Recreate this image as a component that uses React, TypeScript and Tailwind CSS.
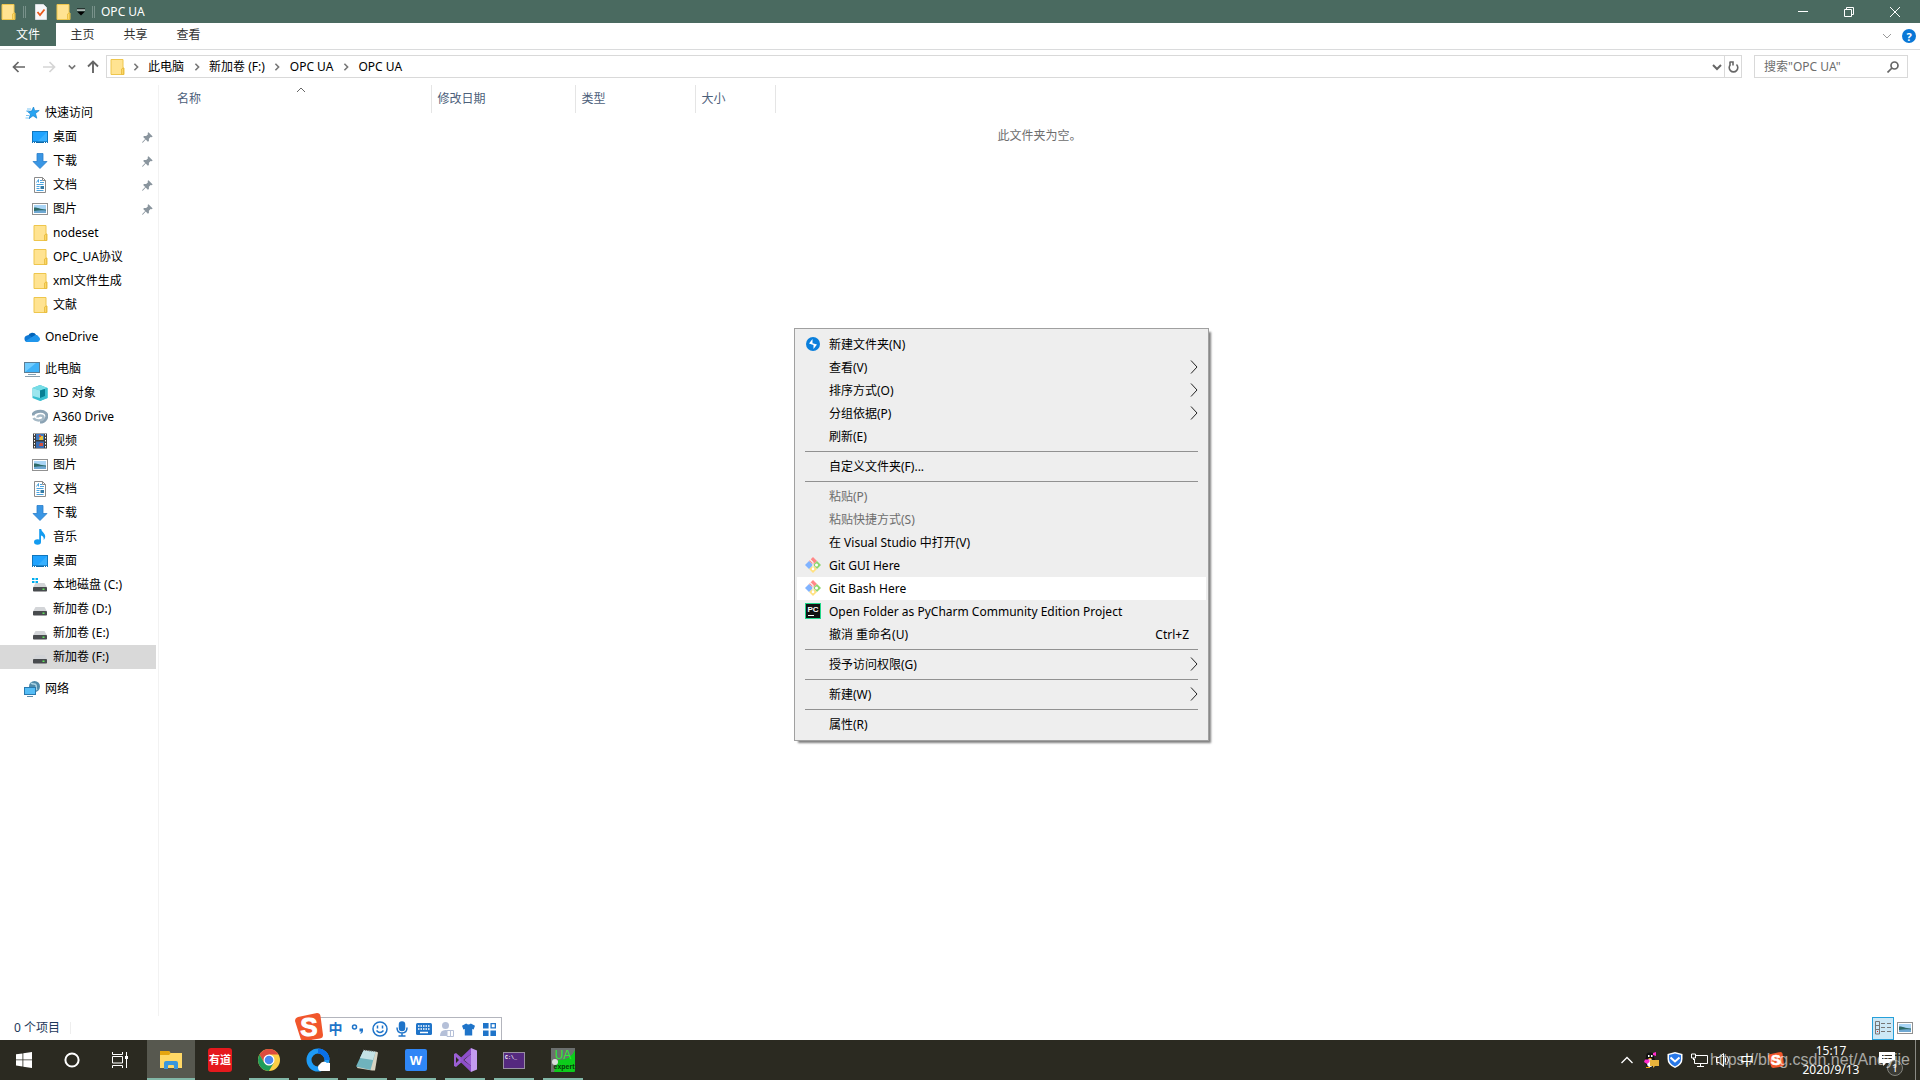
import React, { useState } from "react";

type IconProps = { className?: string };

const Folder = ({ className = "" }: IconProps) => (
  <svg width="16" height="16" viewBox="0 0 16 16" className={className}>
    <path d="M2 0.5h12v8.5h1v6.5H2z" fill="#ffe391" stroke="#eec64d" />
    <path d="M12.5 15.5v-5.5l2-1v6.5z" fill="#fbd866" stroke="#e6b93c" strokeWidth="0.8" />
  </svg>
);

const StarIcon = () => (
  <svg width="16" height="16" viewBox="0 0 16 16">
    <path d="M9.5 2l1.200 3.700 4.500-.2-3.700 3 1.300 4.700-3.800-2.500-4 3 1.500-4.700-3.300-2.700 4.400-.2z" fill="#27a4f2" stroke="#1683cf" strokeWidth="0.7" />
    <path d="M3 4h4M2 6h3M2 10.500h3M1.500 13h3" stroke="#7cc5f3" />
  </svg>
);

const DesktopIcon = () => (
  <svg width="16" height="16" viewBox="0 0 16 16">
    <rect x="0.5" y="2.500" width="15" height="11" fill="#1fa3ff" stroke="#0f76bd" />
    <path d="M5 13L15 3v10z" fill="#37b0ff" />
    <path d="M1 13h14" stroke="#0b5c97" />
    <path d="M1 13.500h1M3 13.500h1M12 13.500h1M14 13.500h1" stroke="#fff" />
  </svg>
);

const DownloadIcon = () => (
  <svg width="16" height="16" viewBox="0 0 16 16">
    <path d="M5 0.500h6v8h4L8 15.500 1 8.500h4z" fill="#3996e4" stroke="#2a7fca" strokeWidth="0.8" />
  </svg>
);

const DocumentIcon = () => (
  <svg width="16" height="16" viewBox="0 0 16 16">
    <path d="M2.500 0.500h8l3 3v12h-11z" fill="#fff" stroke="#8b8b8b" />
    <path d="M10.500 0.500v3h3" fill="none" stroke="#8b8b8b" />
    <path d="M4.500 5.500l2-3v3M8 3.500h2M8 5.500h4M4.500 7.500h7M4.500 9.500h3M4.500 11.500h3M4.500 13.500h7" fill="none" stroke="#4aa3df" />
    <rect x="8.500" y="9" width="3.500" height="3" fill="#347ba6" />
  </svg>
);

const PictureIcon = () => (
  <svg width="16" height="16" viewBox="0 0 16 16">
    <rect x="0.5" y="2.500" width="15" height="11" fill="#fff" stroke="#919191" />
    <path d="M2 4h12v8H2z" fill="#a9d5f6" />
    <path d="M2 6.500c3-.5 5 1.500 12 2V11H2z" fill="#2d6a67" />
    <path d="M2 10c4-.8 8-.8 12-.5V12H2z" fill="#6fa8d2" />
  </svg>
);

const CloudIcon = () => (
  <svg width="16" height="16" viewBox="0 0 16 16">
    <path d="M4 7a4.500 4.500 0 0 1 8.300-.8L7 10z" fill="#0364b8" />
    <path d="M3.500 13A3.300 3.300 0 0 1 3 6.500c1.500-.4 3 .2 4 1L12 13z" fill="#0f78d4" />
    <path d="M10 6.800c1.500-1.200 4-.8 4.600 1A2.800 2.800 0 0 1 13.500 13H4c-1 0-2-.4-2.500-1z" fill="#2096ec" />
  </svg>
);

const ComputerIcon = () => (
  <svg width="16" height="16" viewBox="0 0 16 16">
    <rect x="0.500" y="1.500" width="15" height="10" fill="#3fb2f8" stroke="#5c7e95" />
    <path d="M1 11L12 2H1z" fill="#70ccff" />
    <path d="M4 13.500h8" stroke="#86a3b6" />
    <path d="M1 15.500h15" stroke="#8ba0ae" />
  </svg>
);

const CubeIcon = () => (
  <svg width="16" height="16" viewBox="0 0 16 16">
    <path d="M8 0l7.500 3v10L8 16 .5 13V3z" fill="#37bfd0" />
    <path d="M8 0l7.500 3L8 5.500.5 3z" fill="#77dde6" />
    <path d="M8 5.500L15.500 3v10L8 16z" fill="#37bfd0" />
    <path d="M8 5.500l5-1.500v7L8 13z" fill="#067f94" />
    <path d="M.5 3L8 5.500V13L.5 11z" fill="#9be6ee" />
  </svg>
);

const A360Icon = () => (
  <svg width="16" height="16" viewBox="0 0 16 16" fill="none">
    <path d="M1 6.500c0-4 9-6 12.500-2.500S13 13 8 13" stroke="#8ba3b4" strokeWidth="3" />
    <path d="M1.500 9c2 3.500 10 3 10-.5 0-3-6-2.500-6 0" stroke="#a7bac7" strokeWidth="2.500" />
  </svg>
);

const VideoIcon = () => (
  <svg width="16" height="16" viewBox="0 0 16 16">
    <path d="M1 0.500h14v15H1z" fill="#3c3c3c" />
    <path d="M4 1h8v6H4z" fill="#3e78c0" />
    <path d="M4 8.500h8V15H4z" fill="#386db5" />
    <path d="M8 3h3v4H7z" fill="#e6c336" />
    <path d="M7 2h2v2H7zM8 10h3v3H7z" fill="#d5513b" />
    <path d="M2.500 1v14M13.500 1v14" stroke="#fff" strokeDasharray="1.500 1.500" />
  </svg>
);

const MusicIcon = () => (
  <svg width="16" height="16" viewBox="0 0 16 16">
    <ellipse cx="5.500" cy="13" rx="3.500" ry="2.700" fill="#139bf0" />
    <path d="M7.200 0h2c.3 3 4 4 4 7.500 0 1.500-.7 2.500-1.500 3.500.4-2.500-.7-4-2.700-4.500V13H7.200z" fill="#139bf0" />
  </svg>
);

const DriveIcon = ({ system = false }: { system?: boolean }) => (
  <svg width="16" height="16" viewBox="0 0 16 16">
    <path d="M3.500 6h9L15 10.500H1z" fill="#d3d5d8" />
    <rect x="1" y="10" width="14" height="4.500" rx="0.800" fill="#484b4e" />
    <rect x="10.500" y="11.500" width="2" height="1.500" fill="#5fe35b" />
    {system && <path d="M0 1h2.500v2H0zM3.500 1H6v2H3.500zM0 4h2.500v2H0zM3.500 4H6v2H3.500z" fill="#00adef" />}
  </svg>
);

const NetworkIcon = () => (
  <svg width="16" height="16" viewBox="0 0 16 16">
    <circle cx="10.500" cy="5.500" r="5.500" fill="#4f8aa9" />
    <path d="M7 2c2 2 4 0 5 2s-1 3 1 5" stroke="#abd4e5" strokeWidth="1.500" fill="none" />
    <rect x="0.500" y="6.500" width="11" height="7" fill="#55bdf6" stroke="#2979ae" />
    <path d="M3 15.500h6" stroke="#5c8aa8" />
  </svg>
);

const PinIcon = () => (
  <svg width="11" height="11" viewBox="0 0 11 11" fill="#8a959e">
    <path d="M6.500 .3L10.700 4.500 9.600 5.300 8.600 5 6.900 6.800 6.900 8.900 5.900 9.700 3.700 7.400 1 10.500 0 11l.5-1.200L3.200 7 1.200 5l.8-1 2.200 0 1.800-1.700-.4-1.200z" />
  </svg>
);

type Dir = "up" | "down" | "right";
const chevrons: Record<Dir, string> = { up: "M1 6l4-4 4 4", down: "M1 2l4 4 4-4", right: "M3 0l4 4-4 4" };
const Chevron = ({ dir, color = "#666", bold = false, size = 10 }: { dir: Dir; color?: string; bold?: boolean; size?: number }) => (
  <svg width={size} height={size} viewBox="0 0 10 8" fill="none" className="shrink-0">
    <path d={chevrons[dir]} stroke={color} strokeWidth={bold ? 2 : 1} />
  </svg>
);

const SogouIcon = ({ size }: { size: number }) => (
  <svg width={size} height={size} viewBox="0 0 28 28" className="shrink-0">
    <path d="M3 4L22 0q3 0 3.500 3L28 22q0 3-3 3.500L9 28q-3 0-3.600-3L0 8q0-3 3-4z" fill="#f1562b" />
    <text x="14" y="23" textAnchor="middle" fontSize="26" fontWeight="bold" fill="#fff" stroke="#fff" fontFamily="Liberation Sans, sans-serif">S</text>
  </svg>
);

const GitIcon = () => (
  <svg width="16" height="16" viewBox="0 0 16 16">
    <path d="M8 0l4 4-4 4-4-4z" fill="#f88" />
    <path d="M12 4l4 4-4 4-4-4z" fill="#8cd66d" />
    <path d="M8 8l4 4-4 4-4-4z" fill="#ffe180" />
    <path d="M4 4l4 4-4 4-4-4z" fill="#80b3ff" />
    <path d="M5 2.500l3 3v6" stroke="#f4f4f4" strokeWidth="1.200" fill="none" />
    <circle cx="11.500" cy="8" r="1.500" fill="#fff" />
    <circle cx="8" cy="12" r="1.300" fill="#fff" />
  </svg>
);

const PyCharmIcon = () => (
  <svg width="16" height="16" viewBox="0 0 16 16">
    <rect x="0.500" y="0.500" width="15" height="15" fill="#111" stroke="#21d789" />
    <text x="8" y="8.500" textAnchor="middle" fontSize="8" fontWeight="bold" fill="#fff" fontFamily="Liberation Sans, sans-serif">PC</text>
    <path d="M3 12.500h6" stroke="#fff" />
  </svg>
);

const NewFolderIcon = () => (
  <svg width="14" height="14" viewBox="0 0 14 14">
    <circle cx="7" cy="7" r="7" fill="#0a7fdc" />
    <path d="M6.500 2v4.200L11 7.500 7.500 12V8L3 6.500z" fill="#fff" />
  </svg>
);

const quickAccess = [
  { name: "桌面", icon: <DesktopIcon />, pinned: true },
  { name: "下载", icon: <DownloadIcon />, pinned: true },
  { name: "文档", icon: <DocumentIcon />, pinned: true },
  { name: "图片", icon: <PictureIcon />, pinned: true },
  { name: "nodeset", icon: <Folder /> },
  { name: "OPC_UA协议", icon: <Folder /> },
  { name: "xml文件生成", icon: <Folder /> },
  { name: "文献", icon: <Folder /> },
];

const computer = [
  { name: "3D 对象", icon: <CubeIcon /> },
  { name: "A360 Drive", icon: <A360Icon /> },
  { name: "视频", icon: <VideoIcon /> },
  { name: "图片", icon: <PictureIcon /> },
  { name: "文档", icon: <DocumentIcon /> },
  { name: "下载", icon: <DownloadIcon /> },
  { name: "音乐", icon: <MusicIcon /> },
  { name: "桌面", icon: <DesktopIcon /> },
  { name: "本地磁盘 (C:)", icon: <DriveIcon system /> },
  { name: "新加卷 (D:)", icon: <DriveIcon /> },
  { name: "新加卷 (E:)", icon: <DriveIcon /> },
  { name: "新加卷 (F:)", icon: <DriveIcon /> },
];

type TreeItem = { name: string; icon: React.ReactNode; pinned?: boolean };

function TreeGroup({ root, items = [], selected, onSelect }: { root: TreeItem; items?: TreeItem[]; selected: string; onSelect: (name: string) => void }) {
  return (
    <div>
      <a href="#" className="flex h-6 items-center gap-[5px] pl-6 hover:bg-[#e5f3ff]">
        {root.icon}
        {root.name}
      </a>
      {items.map((item) => (
        <a
          key={item.name}
          href="#"
          onClick={() => onSelect(item.name)}
          className={`${selected === item.name ? "bg-[#d9d9d9]" : ""} mr-0.5 flex h-6 items-center gap-[5px] pl-8 pr-[3px]`}
        >
          {item.icon}
          <span className="flex-1">{item.name}</span>
          {item.pinned && <PinIcon />}
        </a>
      ))}
    </div>
  );
}

type MenuEntry = { label: string; icon?: React.ReactNode; sub?: boolean; disabled?: boolean; active?: boolean; shortcut?: string };

// each inner list is one block between separators
const menuGroups: MenuEntry[][] = [
  [
    { label: "新建文件夹(N)", icon: <NewFolderIcon /> },
    { label: "查看(V)", sub: true },
    { label: "排序方式(O)", sub: true },
    { label: "分组依据(P)", sub: true },
    { label: "刷新(E)" },
  ],
  [{ label: "自定义文件夹(F)..." }],
  [
    { label: "粘贴(P)", disabled: true },
    { label: "粘贴快捷方式(S)", disabled: true },
    { label: "在 Visual Studio 中打开(V)" },
    { label: "Git GUI Here", icon: <GitIcon /> },
    { label: "Git Bash Here", icon: <GitIcon />, active: true },
    { label: "Open Folder as PyCharm Community Edition Project", icon: <PyCharmIcon /> },
    { label: "撤消 重命名(U)", shortcut: "Ctrl+Z" },
  ],
  [{ label: "授予访问权限(G)", sub: true }],
  [{ label: "新建(W)", sub: true }],
  [{ label: "属性(R)" }],
];

function ContextMenu() {
  return (
    <div className="absolute left-[794px] top-[328px] w-[415px] border border-[#a0a0a0] bg-[#eeeeee] px-0.5 py-1 shadow-[3px_3px_2px_-1px_rgba(0,0,0,0.5)]">
      {menuGroups.map((group, i) => (
        <React.Fragment key={i}>
          {i > 0 && <hr className="mx-2 my-[3px] border-[#919191]" />}
          {group.map((entry) => (
            <button
              key={entry.label}
              disabled={entry.disabled}
              className={`${entry.active ? "bg-white" : ""} flex h-[23px] w-full items-center pl-2 pr-[7px] text-left hover:bg-white disabled:text-[#6d6d6d]`}
            >
              <span className="mr-2 flex w-4 justify-center pb-px">{entry.icon}</span>
              <span className="flex-1">{entry.label}</span>
              {entry.shortcut && <span className="pr-2.5">{entry.shortcut}</span>}
              {entry.sub && (
                <span className="pb-0.5">
                  <svg width="10" height="14" viewBox="0 0 10 14" fill="none">
                    <path d="M2 0.500L8 7l-6 6.500" stroke="#222" />
                  </svg>
                </span>
              )}
            </button>
          ))}
        </React.Fragment>
      ))}
    </div>
  );
}

const taskbarApps = [
  {
    name: "有道",
    running: false,
    icon: (
      <svg width="24" height="24" viewBox="0 0 24 24">
        <rect width="24" height="24" rx="3" fill="#e5191d" />
        <text x="12" y="16" textAnchor="middle" fontSize="11" fontWeight="bold" fill="#fff">有道</text>
      </svg>
    ),
  },
  {
    name: "Chrome",
    running: true,
    icon: (
      <svg width="22" height="22" viewBox="0 0 22 22">
        <circle cx="11" cy="11" r="11" fill="#fbcf45" />
        <path d="M1.500 5.500A11 11 0 0 1 20.500 5.500H11L6.200 13.800z" fill="#dd4b3e" />
        <path d="M1.500 5.500A11 11 0 0 0 11 22l4.800-8.200L11 16.500 6.200 13.800z" fill="#1e9d5a" />
        <circle cx="11" cy="11" r="5.500" fill="#fff" />
        <circle cx="11" cy="11" r="4.300" fill="#4a87ee" />
      </svg>
    ),
  },
  {
    name: "QQ浏览器",
    running: true,
    icon: (
      <svg width="24" height="24" viewBox="0 0 24 24">
        <circle cx="12" cy="12" r="9" fill="none" stroke="#1e9bf5" strokeWidth="5" />
        <path d="M12 3a9 9 0 0 1 9 9" fill="none" stroke="#0a6fe8" strokeWidth="5" />
        <path d="M14 23a4 4 0 0 1 0-7 4.500 4.500 0 0 1 7-1 4 4 0 0 1 2 8z" fill="#fff" />
      </svg>
    ),
  },
  {
    name: "记事本",
    running: true,
    icon: (
      <svg width="24" height="24" viewBox="0 0 24 24">
        <path d="M9 2l12 1.500 2 1-3 18-3 0L2 20z" fill="#d7d3c2" />
        <path d="M8.500 2.500l12 1.500L15.500 22 1 18.500z" fill="#6fb3bd" />
        <path d="M8.500 2.500l12 1.500-2.500 8-13-2z" fill="#c4e2e5" />
        <path d="M8 2l13 1.500" stroke="#666" strokeDasharray="1 1" />
      </svg>
    ),
  },
  {
    name: "WPS",
    running: true,
    icon: (
      <svg width="22" height="22" viewBox="0 0 22 22">
        <rect width="22" height="22" rx="2" fill="#2f86f6" />
        <text x="11" y="15.500" textAnchor="middle" fontSize="13" fontWeight="bold" fill="#fff" fontFamily="Liberation Sans, sans-serif">W</text>
      </svg>
    ),
  },
  {
    name: "Visual Studio",
    running: true,
    icon: (
      <svg width="24" height="24" viewBox="0 0 24 24">
        <path d="M1 6l2-1 15 13V6L3 19l-2-1V6zm2 3v6l3-3z" fill="#9b5fd4" fillRule="evenodd" />
        <path d="M18 6L9.500 12.500l-2.500-2L18 0v6zM18 18L9.500 11.500l-2.500 2L18 24z" fill="#8e4fca" />
        <path d="M18 0l6 2.500v19L18 24z" fill="#c49bf0" />
      </svg>
    ),
  },
  {
    name: "命令提示符",
    running: true,
    icon: (
      <svg width="22" height="17" viewBox="0 0 22 17">
        <rect x="0.500" y="0.500" width="21" height="16" fill="#55297f" stroke="#998fa2" />
        <text x="2" y="7" fontSize="5" fontWeight="bold" fill="#fff" fontFamily="Liberation Mono, monospace">C:\_</text>
      </svg>
    ),
  },
  {
    name: "UaExpert",
    running: true,
    icon: (
      <svg width="24" height="24" viewBox="0 0 24 24">
        <rect width="24" height="24" rx="1" fill="#0ccc1b" />
        <path d="M0 0h24v2q-4 10-17 10L3 24H0z" fill="#6c706f" />
        <circle cx="4" cy="14" r="3" fill="#d9dedb" />
        <text x="12" y="11" textAnchor="middle" fontSize="12" fill="#2af036" fontFamily="Liberation Sans, sans-serif">UA</text>
        <text x="13" y="21" textAnchor="middle" fontSize="7" fontWeight="bold" fill="#063a08" fontFamily="Liberation Sans, sans-serif">expert</text>
      </svg>
    ),
  },
];

function Taskbar() {
  return (
    <footer className="relative flex h-10 items-stretch bg-[#2b2a21] text-white">
      <button aria-label="开始" className="flex w-12 items-center justify-center">
        <svg width="16" height="16" viewBox="0 0 16 16" fill="#fff">
          <path d="M0 2.300L6.500 1.400v6.100H0zM7.300 1.300L16 0v7.500H7.300zM0 8.300h6.500v6.200L0 13.600zM7.300 8.300H16V16l-8.700-1.300z" />
        </svg>
      </button>
      <button aria-label="搜索" className="flex w-12 items-center justify-center">
        <svg width="16" height="16" viewBox="0 0 16 16">
          <circle cx="8" cy="8" r="6.600" fill="none" stroke="#fff" strokeWidth="2" />
        </svg>
      </button>
      <button aria-label="任务视图" className="mr-[3px] flex w-12 items-center justify-center">
        <svg width="16" height="16" viewBox="0 0 16 16" fill="none" stroke="#fff">
          <path d="M0.500 0v2.500h10V0M0.500 16v-2.500h10V16M0.500 4.500h10v6.500h-10zM14.500 0v16" />
          <path d="M13 4h3v3h-3z" fill="#fff" stroke="none" />
        </svg>
      </button>
      <button aria-label="文件资源管理器" className="mr-px flex w-12 items-center justify-center border-b-2 border-[#82b7a7] bg-[#57584f] pt-0.5">
        <svg width="22" height="18" viewBox="0 0 22 18">
          <path d="M0 0h9l1.500 2H22v15H0z" fill="#ffd866" />
          <path d="M0 0h9l1.500 2.500L9 4H0z" fill="#e5a50f" />
          <path d="M4 18v-6q0-2 2-2h10q2 0 2 2v6h-4v-3q0-1-1-1H9q-1 0-1 1v3z" fill="#3a97dd" />
        </svg>
      </button>
      {taskbarApps.map((app) => (
        <button key={app.name} aria-label={app.name} className="mr-px flex w-12 flex-col items-center">
          <span className="flex flex-1 items-center pt-0.5">{app.icon}</span>
          <span className={`${app.running ? "bg-[#82b7a7]" : ""} h-0.5 w-10`} />
        </button>
      ))}
      <div className="ml-auto flex items-center">
        <button aria-label="显示隐藏的图标" className="mr-2.5">
          <svg width="12" height="8" viewBox="0 0 12 8" fill="none">
            <path d="M0.500 7L6 1.500 11.500 7" stroke="#fff" strokeWidth="1.300" />
          </svg>
        </button>
        <svg width="16" height="16" viewBox="0 0 16 16" className="mr-2">
          <ellipse cx="7" cy="9" rx="5" ry="6.500" fill="#111" />
          <circle cx="7" cy="4.500" r="4" fill="#111" />
          <ellipse cx="7" cy="11" rx="3" ry="4" fill="#fff" />
          <path d="M5 3h1.500v2H5zM8 3h1.500v2H8z" fill="#fff" />
          <path d="M5 6h4l-2 1.500z" fill="#f5a400" />
          <path d="M2 7.500h4.500V10L4 12 1 10zM10 1l3-1v4l-3-1z" fill="#ff2ccc" />
          <path d="M7 8h9v6h-4l-2 2v-2H7z" fill="#e8b33c" />
          <path d="M3 15.500h4" stroke="#f5a400" />
        </svg>
        <svg width="16" height="16" viewBox="0 0 16 16" className="mr-2">
          <path d="M8 0l7.500 2v5q0 6-7.500 9Q.5 13 .5 7V2z" fill="#fff" />
          <path d="M8 1.500l6 1.600V7q0 5-6 7.500Q2 12 2 7V3.100z" fill="#2878e8" />
          <path d="M3.500 5.500L8 9.500l4.500-4" stroke="#fff" strokeWidth="2" fill="none" />
        </svg>
        <svg width="17" height="15" viewBox="0 0 17 15" fill="none" stroke="#fff" className="mr-2">
          <path d="M5 2.500h11.500v8H3.500V6M6 13.500h7M9.500 10.500v3M0.500 1h4v4h-4zM2.500 5v2" />
        </svg>
        <svg width="16" height="16" viewBox="0 0 16 16" fill="none" stroke="#fff" className="mr-2">
          <path d="M0.500 5.500h2.500L7.500 1.500v13L3 10.500H0.500zM9.500 6v4M11.500 4.500q2 3.500 0 7" />
        </svg>
        <span className="w-3.5 text-sm">中</span>
        <span className="ml-3.5 mr-[17px]"><SogouIcon size={16} /></span>
        <time className="w-[60px] text-center leading-[19px]">
          15:17
          <br />
          2020/9/13
        </time>
        <button aria-label="通知" className="relative ml-[18px] h-10 w-9">
          <svg width="28" height="30" viewBox="0 0 28 30" className="absolute left-0 top-2">
            <path d="M0 4h16v11H7l-3 3v-3H0z" fill="#fff" />
            <path d="M3 7.500h10M3 10.500h10" stroke="#2b2a21" />
            <circle cx="16" cy="20" r="7.500" fill="#3a3a34" stroke="#85857e" />
            <text x="16" y="24" textAnchor="middle" fontSize="11" fill="#fff">1</text>
          </svg>
        </button>
        <span className="mr-1 h-10 w-px bg-[#8a8a84]" />
      </div>
      <span className="pointer-events-none absolute right-[10px] top-2 whitespace-nowrap font-['Liberation_Sans',sans-serif] text-base leading-6 text-white/60">
        https://blog.csdn.net/Andyjie
      </span>
    </footer>
  );
}

function ImeBar() {
  return (
    <div className="absolute bottom-0 left-[295px] flex h-[27px] w-[207px] items-end">
      <div className="ml-4 flex h-[23px] flex-1 items-center gap-2 border border-b-0 border-[#b3b5bd] bg-white pl-4 text-[#1f74c9]">
        <span className="w-[15px] text-center text-sm font-bold leading-none">中</span>
        <svg width="13" height="14" viewBox="0 0 13 14">
          <circle cx="3.500" cy="5" r="2" fill="none" stroke="#1f74c9" strokeWidth="1.500" />
          <path d="M8.500 6.500H12v2.500q0 2-2.500 3v-1.300q1-.5 1-1.200h-2z" fill="#1f74c9" />
        </svg>
        <svg width="16" height="16" viewBox="0 0 16 16" fill="none" stroke="#1f74c9" strokeWidth="1.500">
          <circle cx="8" cy="8" r="7" />
          <path d="M5.500 4.500v3M10.500 4.500v3M4.500 9.500q3.500 4 7 0" />
        </svg>
        <svg width="12" height="16" viewBox="0 0 12 16" fill="none" stroke="#1f74c9" strokeWidth="1.500">
          <rect x="3.500" y="1" width="5" height="8.500" rx="2.500" fill="#1f74c9" />
          <path d="M1 6.500q0 5.500 5 5.500t5-5.500M6 12v3M2.500 15h7" />
        </svg>
        <svg width="16" height="12" viewBox="0 0 16 12">
          <rect width="16" height="12" rx="1.500" fill="#1f74c9" />
          <path d="M2 3h12M2 6h12" stroke="#fff" strokeWidth="1.500" strokeDasharray="1.500 1" />
          <path d="M4 9.500h8" stroke="#fff" strokeWidth="1.500" />
        </svg>
        <svg width="14" height="15" viewBox="0 0 14 15">
          <circle cx="5.500" cy="3.500" r="3.500" fill="#b5c0d8" />
          <path d="M0 14q0-6 5.500-6 2 0 3 1v5z" fill="#b5c0d8" />
          <path d="M7 8.500h6.500v6H7zM10.500 8.500v6" fill="#fff" stroke="#b5c0d8" />
        </svg>
        <svg width="13" height="13" viewBox="0 0 14 13" fill="#1f74c9">
          <path d="M4.500 0q2.500 2 5 0L14 2.500l-1.500 4L11 6v7H3V6l-1.500.5L0 2.500z" />
        </svg>
        <svg width="13" height="13" viewBox="0 0 14 14" fill="#1f74c9">
          <path d="M0 0h6v6H0zM0 8h6v6H0zM8 8h6v6H8z" />
          <path d="M8.700 .7h4.600v4.600H8.700z" fill="none" stroke="#1f74c9" strokeWidth="1.400" />
        </svg>
      </div>
      <span className="absolute left-0 top-0"><SogouIcon size={28} /></span>
    </div>
  );
}

const path = ["此电脑", "新加卷 (F:)", "OPC UA", "OPC UA"];

export default function App() {
  const [selected, setSelected] = useState("新加卷 (F:)");
  const [search, setSearch] = useState("");

  return (
    <div className="relative flex min-h-screen flex-col bg-white font-['Noto_Sans','Noto_Sans_CJK_SC',sans-serif] text-xs text-black">
      <header className="flex h-[23px] items-center bg-[#4a6a60] text-white">
        <Folder />
        <span className="ml-[7px] h-3 w-[3px] border-x border-[#78918a]" />
        <svg width="12" height="16" viewBox="0 0 12 16" className="ml-[9px]">
          <path d="M0.500 0.500h8l3 3v12H.5z" fill="#f7f8fa" stroke="#d7dce0" />
          <path d="M2.500 8L5 11l4.500-5.500" stroke="#ea5a1c" strokeWidth="1.800" fill="none" />
        </svg>
        <Folder className="ml-2" />
        <svg width="8" height="8" viewBox="0 0 8 8" className="ml-1.5">
          <path d="M0 1h8" stroke="#000" />
          <path d="M0 3.500h8L4 7.500z" fill="#000" />
          <path d="M0 2h8" stroke="#fff" />
        </svg>
        <span className="ml-[7px] h-3 w-[3px] border-x border-[#78918a]" />
        <h1 className="ml-1.5">OPC UA</h1>
        <div className="ml-auto flex h-full pr-0.5">
          <button aria-label="最小化" className="flex w-[46px] items-center justify-center">
            <span className="h-px w-2.5 bg-white" />
          </button>
          <button aria-label="还原" className="flex w-[46px] items-center justify-center">
            <svg width="10" height="10" viewBox="0 0 10 10" fill="none" stroke="#fff">
              <path d="M0.500 2.500h7v7h-7zM2.500 2.500v-2h7v7h-2" />
            </svg>
          </button>
          <button aria-label="关闭" className="flex w-[46px] items-center justify-center">
            <svg width="10" height="10" viewBox="0 0 10 10" fill="none" stroke="#fff">
              <path d="M0 0l10 10M10 0L0 10" />
            </svg>
          </button>
        </div>
      </header>

      <nav className="flex h-[27px] items-start border-b border-[#dadbdc] text-[#333]">
        <button className="h-[23px] w-14 bg-[#4a6a60] text-white">文件</button>
        <button className="h-6 w-[53px]">主页</button>
        <button className="h-6 w-[53px]">共享</button>
        <button className="h-6 w-[53px]">查看</button>
        <div className="ml-auto flex h-[26px] items-center gap-2.5 pr-1">
          <Chevron dir="down" color="#999" />
          <button aria-label="帮助" className="flex size-3.5 items-center justify-center rounded-full bg-[#0a78d7] text-[11px] font-bold leading-none text-white">?</button>
        </div>
      </nav>

      <div className="flex h-[33px] items-center pl-3 pr-3">
        <button aria-label="后退">
          <svg width="13" height="12" viewBox="0 0 13 12" fill="none" stroke="#666" strokeWidth="1.700">
            <path d="M13 6H1.500M6.500 1l-5 5 5 5" />
          </svg>
        </button>
        <button aria-label="前进" className="ml-[18px]">
          <svg width="13" height="12" viewBox="0 0 13 12" fill="none" stroke="#d5d5d5" strokeWidth="1.700">
            <path d="M0 6h11.500M6.500 1l5 5-5 5" />
          </svg>
        </button>
        <button aria-label="最近浏览的位置" className="ml-3">
          <Chevron dir="down" color="#777" bold size={8} />
        </button>
        <button aria-label="上移" className="ml-[11px]">
          <svg width="12" height="13" viewBox="0 0 12 13" fill="none" stroke="#666" strokeWidth="1.900">
            <path d="M6 13V1.500M1 6.500l5-5 5 5" />
          </svg>
        </button>
        <div className="ml-[7px] flex h-[23px] flex-1 items-center border border-[#d9d9d9] pl-0.5">
          <Folder />
          {path.map((part, i) => (
            <React.Fragment key={i}>
              <span className="flex w-[21px] justify-center">
                <Chevron dir="right" color="#777" bold size={8} />
              </span>
              <a href="#" className="px-0.5">{part}</a>
            </React.Fragment>
          ))}
          <button aria-label="以前的位置" className="ml-auto mr-0.5">
            <Chevron dir="down" color="#666" bold />
          </button>
          <button aria-label="刷新" className="flex h-full w-[17px] items-center justify-center border-l border-[#d9d9d9]">
            <svg width="11" height="12" viewBox="0 0 11 12" fill="none" stroke="#666" strokeWidth="1.600">
              <path d="M8.500 3.500A4.300 4.300 0 1 1 2.500 3.500M2 1v3.500M1.500 1H5v3.500" />
            </svg>
          </button>
        </div>
        <label className="ml-3 flex h-[23px] w-[154px] items-center border border-[#d9d9d9] pl-[9px] pr-2">
          <input
            aria-label="搜索"
            value={search}
            onChange={(e) => setSearch(e.target.value)}
            placeholder={'搜索"OPC UA"'}
            className="w-0 flex-1 outline-none placeholder:text-[#6d6d6d]"
          />
          <svg width="12" height="12" viewBox="0 0 12 12" fill="none" stroke="#666" strokeWidth="1.700">
            <circle cx="7.500" cy="4.500" r="3.500" />
            <path d="M5 7L.5 11.500" />
          </svg>
        </label>
      </div>

      <main className="flex flex-1 pt-0.5">
        <aside className="flex w-[159px] flex-col gap-2 border-r border-[#f2f2f2] pt-4">
          <TreeGroup root={{ name: "快速访问", icon: <StarIcon /> }} items={quickAccess} selected={selected} onSelect={setSelected} />
          <TreeGroup root={{ name: "OneDrive", icon: <CloudIcon /> }} selected={selected} onSelect={setSelected} />
          <TreeGroup root={{ name: "此电脑", icon: <ComputerIcon /> }} items={computer} selected={selected} onSelect={setSelected} />
          <TreeGroup root={{ name: "网络", icon: <NetworkIcon /> }} selected={selected} onSelect={setSelected} />
        </aside>
        <section className="flex-1">
          <table className="w-full table-fixed">
            <thead>
              <tr className="h-7 text-left text-[#4c607a]">
                <th className="relative w-[272px] border-r border-[#e5e5e5] pl-[18px] font-normal">
                  名称
                  <span className="absolute inset-x-0 top-0 flex justify-center pl-3"><Chevron dir="up" /></span>
                </th>
                <th className="w-36 border-r border-[#e5e5e5] pl-1.5 font-normal">修改日期</th>
                <th className="w-[120px] border-r border-[#e5e5e5] pl-1.5 font-normal">类型</th>
                <th className="w-20 border-r border-[#e5e5e5] pl-1.5 font-normal">大小</th>
                <th />
              </tr>
            </thead>
            <tbody>
              <tr>
                <td colSpan={5} className="pt-[15px] text-center text-[#6d6d6d]">此文件夹为空。</td>
              </tr>
            </tbody>
          </table>
        </section>
      </main>

      <div className="relative flex h-6 items-center pl-3.5 text-[#1e395b]">
        <span className="border-r border-[#eee] pr-2.5 leading-3">0 个项目</span>
        <div className="ml-auto flex h-full items-center gap-[3px] pr-[7px]">
          <button aria-label="详细信息" className="flex h-[23px] w-[22px] items-center justify-center border border-[#26a0da] bg-[#cce8f6]">
            <svg width="16" height="14" viewBox="0 0 16 14" fill="none" stroke="#777">
              <path d="M0.500 0.500h4v12.500h-4zM.5 4.500h4M.5 8.500h4M6 2.500h4M12 2.500h4M6 6.500h4M12 6.500h4M6 10.500h4M12 10.500h4" />
              <path d="M2 10.500h1" stroke="#d22" />
            </svg>
          </button>
          <button aria-label="大缩略图"><PictureIcon /></button>
        </div>
        <ImeBar />
      </div>

      <Taskbar />
      <ContextMenu />
    </div>
  );
}
